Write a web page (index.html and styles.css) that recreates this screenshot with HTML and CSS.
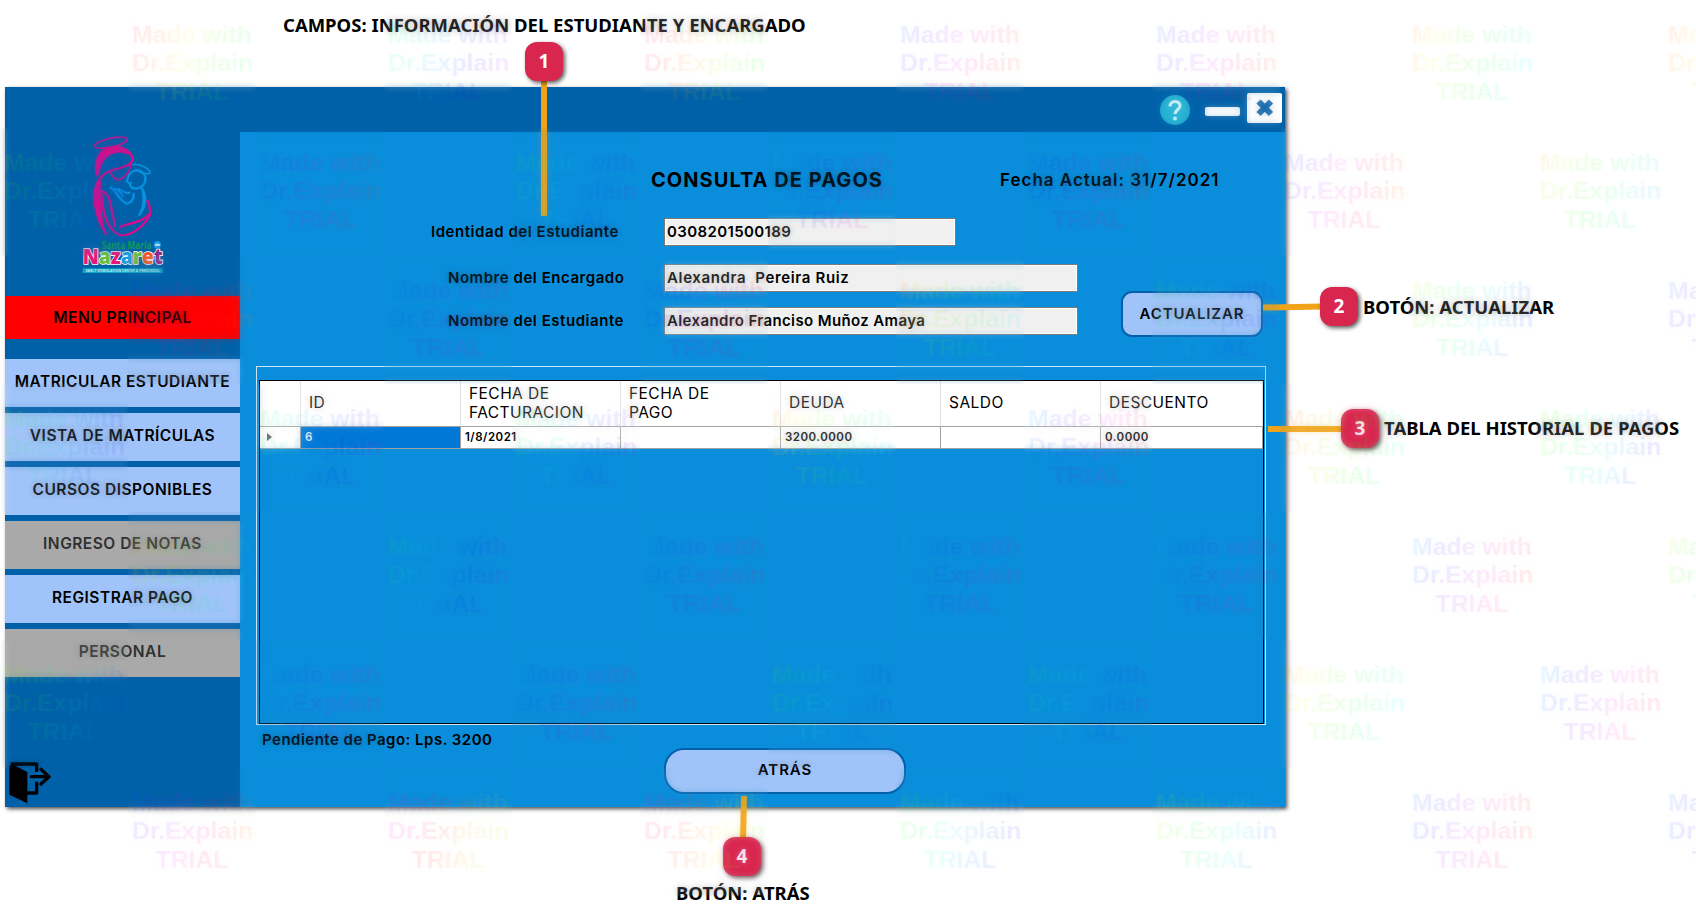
FILE: index.html
```html
<!DOCTYPE html>
<html lang="es">
<head>
<meta charset="utf-8">
<title>Consulta de pagos</title>
<link rel="stylesheet" href="styles.css">
</head>
<body>
<main class="canvas">
  <section class="window">
    <header class="titlebar">
      <svg class="help" viewBox="0 0 30 30"><circle cx="15" cy="15" r="15" fill="#26b3d3"/><path d="M10 11.5C10 4.6 20.3 5 20 11.2C19.8 14.6 15.2 14.6 15 19" fill="none" stroke="#e4f8fc" stroke-width="3"/><circle cx="15" cy="23.4" r="2" fill="#e4f8fc"/></svg>
      <span class="minimize"></span>
      <svg class="close" viewBox="0 0 35 30"><rect width="35" height="30" rx="2" fill="#fff"/><path d="M11.500 8.500L24 21M24 8.500L11.500 21" stroke="#1467a9" stroke-width="6"/></svg>
    </header>
    <div class="body">
      <nav class="sidebar">
        <svg class="logo" viewBox="0 36 360 444">
          <g fill="none" stroke="#d80d8c" stroke-width="7" stroke-linecap="round">
            <ellipse cx="153" cy="68" rx="50" ry="13" transform="rotate(-12 153 68)" stroke-width="5"/>
            <path d="M112 166C100 128 116 86 160 81C198 79 222 104 216 124C210 140 180 142 150 153C116 166 100 200 104 244C108 290 124 318 138 342" />
            <path d="M110 160C102 124 124 86 162 82C184 82 200 92 206 102C176 84 122 98 116 156Z" fill="#d80d8c"/>
            <path d="M112 190C96 225 104 290 134 334C124 290 116 240 122 184Z" fill="#d80d8c" stroke-width="3"/>
            <path d="M214 124C214 148 200 168 182 178C166 182 155 170 152 156" stroke-width="5"/>
            <path d="M118 214C142 212 151 238 155 270C157 292 166 302 164 318"/>
            <path d="M124 222C128 292 150 336 180 345C212 350 254 318 270 284C272 268 268 254 262 242"/>
            <path d="M180 322C205 306 240 314 268 282"/>
          </g>
          <g fill="none" stroke="#0a91dd" stroke-width="7" stroke-linecap="round">
            <path d="M220 134C245 130 272 150 270 160C258 164 238 158 228 148" stroke-width="5"/>
            <path d="M203 174C210 146 250 142 256 172C258 194 242 206 226 206C212 206 208 196 212 188M204 172L200 184L208 190"/>
            <path d="M246 206C262 232 256 262 238 284M248 212C254 240 250 262 240 282"/>
            <path d="M152 203C174 220 182 246 202 251C216 246 222 236 221 222M154 205C172 206 184 216 188 228M176 207C188 214 196 222 208 218"/>
          </g>
          <text class="logo-small" x="126" y="387" textLength="148" lengthAdjust="spacingAndGlyphs">Santa María</text>
          <circle cx="292" cy="374" r="11" fill="#1c9ce0"/><text class="logo-de" x="285" y="379">de</text>
          <text class="logo-name" x="68" y="431" textLength="240" lengthAdjust="spacingAndGlyphs"><tspan fill="#e5187c">N</tspan><tspan fill="#69bd45">a</tspan><tspan fill="#e5187c">z</tspan><tspan fill="#1c9ce0">a</tspan><tspan fill="#69bd45">r</tspan><tspan fill="#ef5a28">e</tspan><tspan fill="#8d2c91">t</tspan></text>
          <rect x="68" y="445" width="240" height="14" fill="#12a5c4"/>
          <text class="logo-tag" x="77" y="455.500" textLength="222" lengthAdjust="spacingAndGlyphs">EARLY STIMULATION CENTER &amp; PRESCHOOL</text>
        </svg>
        <div class="item main"><span>MENU PRINCIPAL</span></div>
        <div class="menu">
          <div class="item"><span>MATRICULAR ESTUDIANTE</span></div>
          <div class="item"><span>VISTA DE MATRÍCULAS</span></div>
          <div class="item"><span>CURSOS DISPONIBLES</span></div>
          <div class="item off"><span>INGRESO DE NOTAS</span></div>
          <div class="item"><span>REGISTRAR PAGO</span></div>
          <div class="item off"><span>PERSONAL</span></div>
        </div>
        <svg class="exit" viewBox="26 247 126 126"><path d="M27 258L36 254L81 277V371L27 345Z"/><path d="M31 253H109V276M109 306V340H80" fill="none" stroke="#000" stroke-width="10" stroke-linejoin="round"/><path d="M93 291H144M122 269L146 291L122 313" fill="none" stroke="#000" stroke-width="10" stroke-linecap="round" stroke-linejoin="round"/></svg>
      </nav>
      <div class="content">
        <div class="heading">
          <h1>CONSULTA DE PAGOS</h1>
          <p class="date">Fecha Actual: 31/7/2021</p>
        </div>
        <div class="upper">
          <div class="form">
            <div class="row id"><label>Identidad del Estudiante</label><output>0308201500189</output></div>
            <div class="row guardian"><label>Nombre del Encargado</label><output>Alexandra&nbsp; Pereira Ruiz</output></div>
            <div class="row student"><label>Nombre del Estudiante</label><output>Alexandro Franciso Muñoz Amaya</output></div>
          </div>
          <div class="btn refresh">ACTUALIZAR</div>
        </div>
        <div class="group">
          <div class="grid">
            <div class="tr th"><span></span><span>ID</span><span>FECHA DE<br>FACTURACION</span><span>FECHA DE<br>PAGO</span><span>DEUDA</span><span>SALDO</span><span>DESCUENTO</span></div>
            <div class="tr td"><span><i class="pointer"></i></span><span class="sel">6</span><span>1/8/2021</span><span></span><span>3200.0000</span><span></span><span>0.0000</span></div>
          </div>
        </div>
        <p class="pending">Pendiente de Pago: Lps. 3200</p>
        <div class="btn back">ATRÁS</div>
      </div>
    </div>
  </section>

  <svg class="leaders" viewBox="0 0 1696 922"><path d="M544 78V216M1263 307.500L1322 306.500M1268 429H1344M744 796L743 840"/></svg>
  <p class="note n1">CAMPOS: INFORMACIÓN DEL ESTUDIANTE Y ENCARGADO</p>
  <p class="note n2">BOTÓN: ACTUALIZAR</p>
  <p class="note n3">TABLA DEL HISTORIAL DE PAGOS</p>
  <p class="note n4">BOTÓN: ATRÁS</p>
  <b class="badge b1">1</b>
  <b class="badge b2">2</b>
  <b class="badge b3">3</b>
  <b class="badge b4">4</b>

  <div class="marks">
    <div class="line odd">
      <p class="mark" style="--h:340">Made with<br>Dr.Explain<br>TRIAL</p><p class="mark" style="--h:120">Made with<br>Dr.Explain<br>TRIAL</p><p class="mark" style="--h:320">Made with<br>Dr.Explain<br>TRIAL</p><p class="mark" style="--h:210">Made with<br>Dr.Explain<br>TRIAL</p><p class="mark" style="--h:210">Made with<br>Dr.Explain<br>TRIAL</p><p class="mark" style="--h:20">Made with<br>Dr.Explain<br>TRIAL</p><p class="mark" style="--h:10">Made with<br>Dr.Explain<br>TRIAL</p>
    </div>
    <div class="line">
      <p class="mark" style="--h:80">Made with<br>Dr.Explain<br>TRIAL</p><p class="mark" style="--h:210">Made with<br>Dr.Explain<br>TRIAL</p><p class="mark" style="--h:110">Made with<br>Dr.Explain<br>TRIAL</p><p class="mark" style="--h:170">Made with<br>Dr.Explain<br>TRIAL</p><p class="mark" style="--h:200">Made with<br>Dr.Explain<br>TRIAL</p><p class="mark" style="--h:220">Made with<br>Dr.Explain<br>TRIAL</p><p class="mark" style="--h:35">Made with<br>Dr.Explain<br>TRIAL</p>
    </div>
    <div class="line odd">
      <p class="mark" style="--h:230">Made with<br>Dr.Explain<br>TRIAL</p><p class="mark" style="--h:190">Made with<br>Dr.Explain<br>TRIAL</p><p class="mark" style="--h:200">Made with<br>Dr.Explain<br>TRIAL</p><p class="mark" style="--h:20">Made with<br>Dr.Explain<br>TRIAL</p><p class="mark" style="--h:110">Made with<br>Dr.Explain<br>TRIAL</p><p class="mark" style="--h:70">Made with<br>Dr.Explain<br>TRIAL</p><p class="mark" style="--h:210">Made with<br>Dr.Explain<br>TRIAL</p>
    </div>
    <div class="line">
      <p class="mark" style="--h:90">Made with<br>Dr.Explain<br>TRIAL</p><p class="mark" style="--h:120">Made with<br>Dr.Explain<br>TRIAL</p><p class="mark" style="--h:110">Made with<br>Dr.Explain<br>TRIAL</p><p class="mark" style="--h:20">Made with<br>Dr.Explain<br>TRIAL</p><p class="mark" style="--h:190">Made with<br>Dr.Explain<br>TRIAL</p><p class="mark" style="--h:0">Made with<br>Dr.Explain<br>TRIAL</p><p class="mark" style="--h:80">Made with<br>Dr.Explain<br>TRIAL</p>
    </div>
    <div class="line odd">
      <p class="mark" style="--h:30">Made with<br>Dr.Explain<br>TRIAL</p><p class="mark" style="--h:120">Made with<br>Dr.Explain<br>TRIAL</p><p class="mark" style="--h:190">Made with<br>Dr.Explain<br>TRIAL</p><p class="mark" style="--h:170">Made with<br>Dr.Explain<br>TRIAL</p><p class="mark" style="--h:180">Made with<br>Dr.Explain<br>TRIAL</p><p class="mark" style="--h:195">Made with<br>Dr.Explain<br>TRIAL</p><p class="mark" style="--h:70">Made with<br>Dr.Explain<br>TRIAL</p>
    </div>
    <div class="line">
      <p class="mark" style="--h:70">Made with<br>Dr.Explain<br>TRIAL</p><p class="mark" style="--h:180">Made with<br>Dr.Explain<br>TRIAL</p><p class="mark" style="--h:190">Made with<br>Dr.Explain<br>TRIAL</p><p class="mark" style="--h:90">Made with<br>Dr.Explain<br>TRIAL</p><p class="mark" style="--h:110">Made with<br>Dr.Explain<br>TRIAL</p><p class="mark" style="--h:20">Made with<br>Dr.Explain<br>TRIAL</p><p class="mark" style="--h:190">Made with<br>Dr.Explain<br>TRIAL</p>
    </div>
    <div class="line odd">
      <p class="mark" style="--h:220">Made with<br>Dr.Explain<br>TRIAL</p><p class="mark" style="--h:280">Made with<br>Dr.Explain<br>TRIAL</p><p class="mark" style="--h:300">Made with<br>Dr.Explain<br>TRIAL</p><p class="mark" style="--h:90">Made with<br>Dr.Explain<br>TRIAL</p><p class="mark" style="--h:60">Made with<br>Dr.Explain<br>TRIAL</p><p class="mark" style="--h:205">Made with<br>Dr.Explain<br>TRIAL</p><p class="mark" style="--h:205">Made with<br>Dr.Explain<br>TRIAL</p>
    </div>
  </div>
</main>
</body>
</html>
```
FILE: styles.css
```css
* { box-sizing: border-box; }
body { margin: 0; background: #fff; color: #000; }
p, h1 { margin: 0; white-space: nowrap; }
.canvas { position: relative; width: 1696px; height: 922px; overflow: hidden; font-family: Inter, "Open Sans", sans-serif; }

/* application window */
.window { position: absolute; left: 5px; top: 87px; width: 1280px; height: 720px; display: flex; flex-direction: column; background: #0061a9; box-shadow: 2px 2px 4px rgba(0, 0, 0, .7); }
.titlebar { height: 45px; display: flex; align-items: flex-start; padding: 6px 3px 0 0; justify-content: flex-end; }
.help { width: 30px; height: 30px; margin: 2px 15px 0 0; }
.minimize { width: 35px; height: 9px; margin: 14px 7px 0 0; background: #fff; border-radius: 2px; }
.close { width: 35px; height: 30px; }
.body { flex: 1; display: flex; min-height: 0; }

.sidebar { width: 235px; display: flex; flex-direction: column; font-size: 15.5px; font-weight: 600; }
.logo { width: 120px; height: 148px; margin: 0 0 16px 55px; }
.logo text { font-family: "Open Sans", sans-serif; font-weight: 700; }
.logo-small { font-size: 29px; fill: #139b52; }
.logo .logo-name { font-size: 64px; font-weight: 800; stroke: #fff; stroke-width: 5px; paint-order: stroke; }
.logo .logo-de { font-size: 12px; fill: #fff; }
.logo .logo-tag { font-size: 10px; fill: #bdeaf2; }
.item { height: 48px; display: flex; align-items: center; justify-content: center; background: #a0c4f9; letter-spacing: .5px; white-space: nowrap; padding-bottom: 3px; }
.item.main { height: 43px; background: #f00; padding-bottom: 1px; }
.item.off { background: #a9a9a9; color: #303030; }
.menu { display: flex; flex-direction: column; gap: 6px; margin-top: 20px; }
.exit { width: 42px; height: 42px; margin: auto 0 3px 4px; }

.content { flex: 1; background: #0a8edb; display: flex; flex-direction: column; font-size: 15px; font-weight: 600; }
.heading { display: flex; align-items: center; height: 86px; padding: 10px 0 0 411px; }
.heading h1 { width: 349px; font-size: 20px; font-weight: 700; letter-spacing: 1.05px; }
.date { font-size: 17px; letter-spacing: 1px; }
.upper { display: flex; height: 148px; }
.form { width: 838px; display: flex; flex-direction: column; gap: 15px; }
.row { display: flex; align-items: center; height: 28px; letter-spacing: .5px; }
.row.id { margin-bottom: 3px; }
.row label { width: 424px; padding: 0 0 2px 191px; letter-spacing: .55px; white-space: nowrap; }
.row.guardian label, .row.student label { padding-left: 208px; }
.row output { width: 414px; height: 28px; line-height: 25px; padding-left: 2px; background: #f0f0f0; border: 1px solid #7a7a7a; box-shadow: inset 0 0 0 1px #fff; white-space: nowrap; }
.row.id output { width: 292px; }
.row.id output, .row.student output { letter-spacing: .38px; }
.row.guardian output { letter-spacing: .65px; }
.btn { display: flex; align-items: center; justify-content: center; background: #a0c4f9; border: 2px solid #0061a9; font-size: 15px; letter-spacing: .9px; }
.refresh { width: 142px; height: 46px; border-radius: 11px; margin: 73px 0 0 43px; padding-bottom: 1px; }
.group { width: 1010px; height: 359px; margin-left: 16px; border: 1px solid #c8e4f6; padding: 13px 0 0 2px; }
.grid { width: 1005px; height: 344px; border: 1px solid #000; }
.tr { display: grid; grid-template-columns: 41px repeat(5, 160px) 1fr; background: #fff; }
.tr span { display: flex; align-items: center; border-right: 1px solid #a0a0a0; border-bottom: 1px solid #a0a0a0; }
.th { height: 46px; font-size: 15.5px; font-weight: 400; line-height: 19px; letter-spacing: .45px; }
.th span { padding: 0 0 2px 8px; border-right-color: #e0e0e0; }
.td { height: 22px; font-size: 11.5px; letter-spacing: .5px; }
.td span { padding: 0 0 1px 4px; }
.td .sel { background: #0078d7; color: #fff; }
.pointer { margin-left: 3px; border: 4px solid transparent; border-left: 5px solid #555; border-right: 0; }
.pending { margin: 7px 0 0 22px; height: 16px; line-height: 16px; letter-spacing: .48px; }
.back { width: 242px; height: 46px; margin: 0 0 0 424px; border-radius: 20px; padding-bottom: 3px; }

/* annotations placed over the window */
.leaders { position: absolute; inset: 0; width: 1696px; height: 922px; }
.leaders path { fill: none; stroke: #f0a318; stroke-width: 6; }
.note { position: absolute; font: 700 18.5px/24px "Noto Sans", "Open Sans", sans-serif; letter-spacing: 0; }
.n1 { left: 283px; top: 13px; }
.n2 { left: 1363px; top: 295px; }
.n3 { left: 1384px; top: 416px; }
.n4 { left: 676px; top: 881px; }
.badge { position: absolute; width: 38px; height: 39px; border-radius: 12px; background: #d9264f; color: #fff; font: 700 19px/38px "Open Sans", sans-serif; text-align: center; box-shadow: 2px 2px 4px rgba(0, 0, 0, .65); }
.b1 { left: 525px; top: 42px; }
.b2 { left: 1320px; top: 287px; }
.b3 { left: 1341px; top: 409px; }
.b4 { left: 723px; top: 837px; }

/* repeated trial mark; every tile also veils what lies beneath it */
.marks { position: absolute; inset: 0; overflow: hidden; pointer-events: none; }
.line { display: flex; gap: 128px; width: 1800px; height: 128px; margin-left: 4px; }
.line.odd { margin-left: 132px; }
.mark { position: relative; flex: none; width: 128px; height: 128px; padding: 21px 8px 0 0; font: 700 24.8px/28.300px "Liberation Sans", sans-serif; text-align: center; color: transparent; background: linear-gradient(105deg, hsl(calc(var(--h) * 1deg) 100% 50% / .09), hsl(calc(var(--h) * 1deg + 40deg) 100% 50% / .09), hsl(calc(var(--h) * 1deg + 80deg) 100% 50% / .09), hsl(calc(var(--h) * 1deg + 120deg) 100% 50% / .09), hsl(calc(var(--h) * 1deg + 160deg) 100% 50% / .09), hsl(calc(var(--h) * 1deg + 200deg) 100% 50% / .09)); -webkit-background-clip: text; background-clip: text; }
.mark::before { content: ""; position: absolute; left: -4px; top: 0; width: 128px; height: 128px; backdrop-filter: blur(3px); opacity: .25; }
```
